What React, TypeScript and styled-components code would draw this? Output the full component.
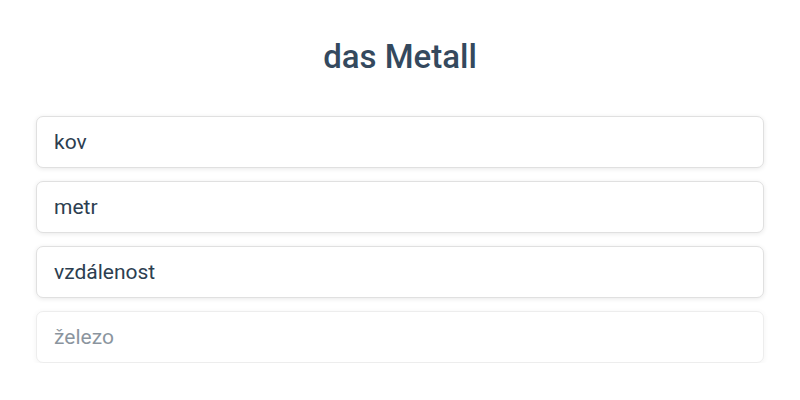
import React from "react";
import styled, { createGlobalStyle } from "styled-components";

const Global = createGlobalStyle`
  html, body { margin: 0; padding: 0; background: #ffffff; }
  body { font-family: Roboto, "Noto Sans", "Liberation Sans", sans-serif; }
`;

const Page = styled.main`
  display: flex;
  flex-direction: column;
  align-items: center;
  padding: 37px 36px 0;
`;

const Title = styled.h1`
  margin: 0 0 39px;
  font-size: 33px;
  line-height: 40px;
  font-weight: 500;
  color: #34495e;
`;

const List = styled.div`
  width: 100%;
  display: flex;
  flex-direction: column;
  gap: 13px;
`;

const Option = styled.button<{ $faded?: boolean }>`
  display: flex;
  align-items: center;
  box-sizing: border-box;
  width: 100%;
  height: 52px;
  padding: 0 17px;
  background: #ffffff;
  border: 1px solid #e0e0e0;
  border-radius: 7px;
  box-shadow: 0 1px 5px rgba(0, 0, 0, 0.09);
  font-family: Roboto, "Noto Sans", "Liberation Sans", sans-serif;
  font-size: 21px;
  color: #2c3e50;
  text-align: left;
  opacity: ${(p) => (p.$faded ? 0.55 : 1)};
  cursor: pointer;
`;

const options = ["kov", "metr", "vzdálenost", "železo"];

export default function App() {
  return (
    <>
      <Global />
      <Page>
        <Title>das Metall</Title>
        <List>
          {options.map((o, i) => (
            <Option key={o} $faded={i === 3}>
              {o}
            </Option>
          ))}
        </List>
      </Page>
    </>
  );
}
